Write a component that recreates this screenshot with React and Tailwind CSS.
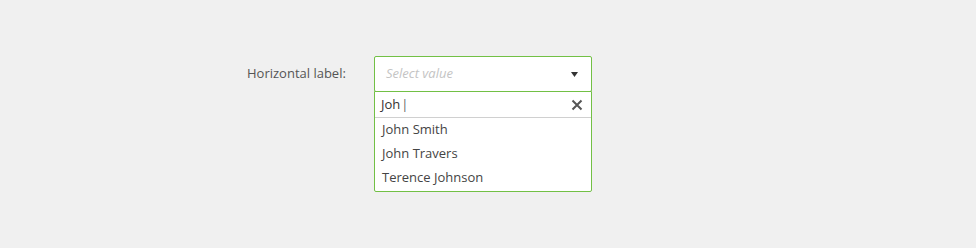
import React from "react";

const options = ["John Smith", "John Travers", "Terence Johnson"];

export default function App() {
  return (
    <div
      className="w-[976px] h-[248px] bg-[#f0f0f0] pt-[56px] pl-[247px] flex"
      style={{ fontFamily: '"Open Sans", "Noto Sans", sans-serif' }}
    >
      <div className="w-[127px] h-[36px] flex items-center text-[13px] text-[#555]">
        Horizontal label:
      </div>
      <div className="w-[218px] flex flex-col">
        <div className="h-[36px] border border-[#72c045] rounded-[2px] bg-white flex items-center justify-between pl-[11px] pr-[13px]">
          <span className="text-[13px] italic text-[#c4c4c4]">Select value</span>
          <svg width="7" height="5" viewBox="0 0 7 5">
            <path d="M0 0 L7 0 L3.5 5 Z" fill="#333" />
          </svg>
        </div>
        <div className="-mt-px border border-[#72c045] rounded-b-[2px] bg-white flex flex-col">
          <div className="h-[26px] flex items-center justify-between pl-[6px] pr-[8px] border-b border-[#d0d0d0]">
            <span className="text-[13px] text-[#333]">
              Joh<span className="text-[#666] ml-[1px]">|</span>
            </span>
            <svg width="12" height="12" viewBox="0 0 12 12">
              <path d="M1.5 1.5 L10.5 10.5 M10.5 1.5 L1.5 10.5" stroke="#555" strokeWidth="2" />
            </svg>
          </div>
          <div className="flex flex-col pb-px">
            {options.map((name) => (
              <div key={name} className="h-[24px] flex items-center pl-[7px] text-[13px] text-[#444]">
                {name}
              </div>
            ))}
          </div>
        </div>
      </div>
    </div>
  );
}
